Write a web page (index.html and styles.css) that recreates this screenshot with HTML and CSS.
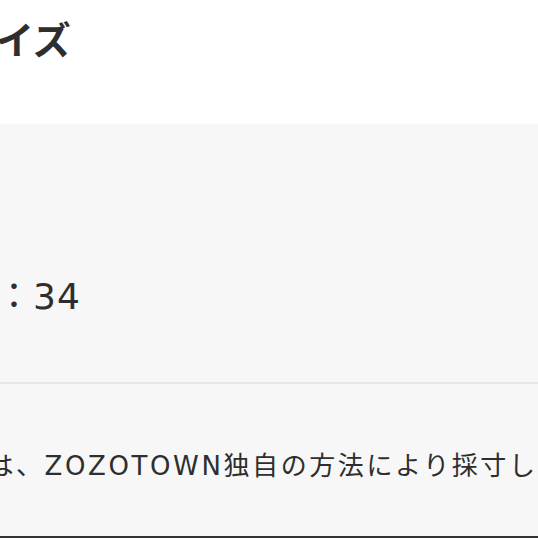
FILE: index.html
```html
<!DOCTYPE html>
<html lang="ja">
<head>
    <meta charset="UTF-8">
    <meta name="viewport" content="width=device-width, initial-scale=1.0">
    <title>サイズ</title>
    <link rel="stylesheet" href="styles.css">
</head>
<body>
    <div class="size-section">
        <h2 class="size-title">サイズ</h2>
        <div class="size-box">
            <div class="size-row">
                <p class="size-value">幅：34</p>
            </div>
            <div class="size-note">
                <p>採寸方法は、ZOZOTOWN独自の方法により採寸しています。</p>
            </div>
        </div>
        <div class="size-footer"></div>
    </div>
</body>
</html>
```

FILE: styles.css
```css
html, body {
    margin: 0;
    padding: 0;
    overflow: hidden;
}
body {
    font-family: "Noto Sans CJK JP", "Noto Sans", sans-serif;
    color: #2e2e2e;
    background-color: #ffffff;
    width: 538px;
    height: 538px;
}
.size-section {
    white-space: nowrap;
}
.size-title {
    margin: 0;
    height: 124px;
    padding: 12px 0 0 0;
    margin-left: -42px;
    box-sizing: border-box;
    font-size: 38px;
    line-height: 52px;
    font-weight: bold;
}
.size-box {
    background-color: #f7f7f7;
}
.size-row {
    height: 260px;
    padding-top: 147px;
    box-sizing: border-box;
    border-bottom: 2px solid #e6e6e6;
}
.size-value {
    margin: 0 0 0 -41px;
    font-family: "DejaVu Sans", "Noto Sans CJK JP", sans-serif;
    font-size: 36px;
    line-height: 52px;
    letter-spacing: 1px;
}
/* 採寸方法の注記 */
.size-note {
    height: 152px;
    padding-top: 62px;
    box-sizing: border-box;
}
.size-note p {
    margin: 0 0 0 -127px;
    font-family: "DejaVu Sans", "Noto Sans CJK JP", sans-serif;
    font-size: 26px;
    line-height: 40px;
    letter-spacing: 2.6px;
}
.size-footer {
    height: 2px;
    background-color: #333333;
}
```
